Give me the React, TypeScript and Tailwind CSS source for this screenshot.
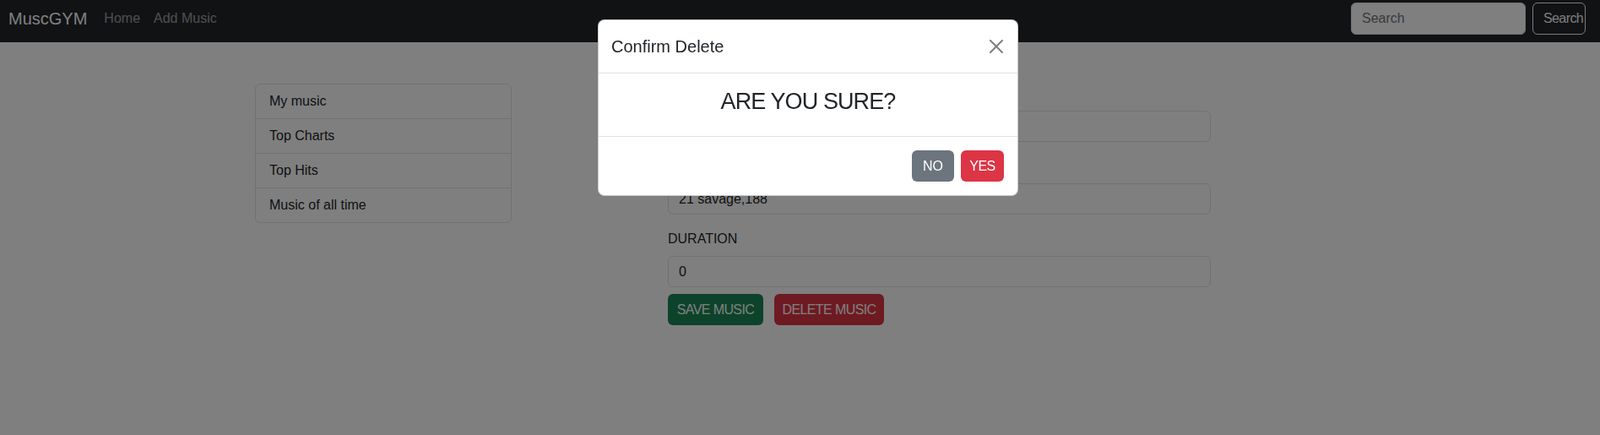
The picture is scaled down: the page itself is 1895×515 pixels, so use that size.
import { useState } from 'react';

const font = { fontFamily: '"Liberation Sans", Arial, sans-serif' };

const menu = ['My music', 'Top Charts', 'Top Hits', 'Music of all time'];

function Navbar() {
  return (
    <nav className="flex h-[50px] items-start bg-[#212529] pl-[10px] pr-[17px] pt-[3px]">
      <div className="flex h-[38px] flex-1 items-center">
        <a className="mr-[12px] text-[20px] leading-[30px] text-white">MuscGYM</a>
        <a className="px-2 text-base text-white/55">Home</a>
        <a className="px-2 text-base text-white/55">Add Music</a>
      </div>
      <form className="flex items-center gap-2">
        <input
          placeholder="Search"
          className="h-[38px] w-[207px] rounded-md border border-[#dee2e6] bg-white px-3 text-base text-[#212529] placeholder:text-[#6c757d]"
        />
        <button
          type="button"
          className="flex h-[38px] w-[63px] items-center whitespace-nowrap rounded-md border border-[#f8f9fa] pl-3 text-base tracking-[-0.6px] text-[#f8f9fa]"
        >
          Search
        </button>
      </form>
    </nav>
  );
}

function Field({ label, value, last }: { label: string; value: string; last?: boolean }) {
  return (
    <div className={last ? '' : 'mb-[17px]'}>
      <label className="mb-2 block text-base leading-6 text-[#212529]">{label}</label>
      <input
        readOnly
        value={value}
        className="block h-[37px] w-full rounded-md border border-[#dee2e6] bg-white px-3 text-base text-[#212529]"
      />
    </div>
  );
}

function ConfirmModal() {
  return (
    <div className="fixed inset-0 bg-black/50">
      <div className="ml-[708px] mt-[23px] w-[498px] rounded-lg border border-black/20 bg-white">
        <div className="flex items-center justify-between border-b border-[#dee2e6] p-4">
          <h5 className="-ml-[1px] text-[20px] leading-[30px] text-[#212529]">Confirm Delete</h5>
          <button type="button" className="mr-[1px] h-4 w-4">
            <svg viewBox="0 0 16 16" className="h-4 w-4" fill="#000" fillOpacity="0.5">
              <path d="M.293.293a1 1 0 0 1 1.414 0L8 6.586 14.293.293a1 1 0 1 1 1.414 1.414L9.414 8l6.293 6.293a1 1 0 0 1-1.414 1.414L8 9.414l-6.293 6.293a1 1 0 0 1-1.414-1.414L6.586 8 .293 1.707a1 1 0 0 1 0-1.414z" />
            </svg>
          </button>
        </div>
        <div className="border-b border-[#dee2e6] p-4">
          <h3 className="mb-2 text-center text-[27px] leading-[34px] tracking-[-0.9px] text-[#212529]">
            ARE YOU SURE?
          </h3>
        </div>
        <div className="flex justify-end gap-2 px-4 py-4">
          <button type="button" className="h-[37px] w-[50px] rounded-md bg-[#6c757d] text-base text-white">
            NO
          </button>
          <button type="button" className="h-[37px] w-[51px] rounded-md bg-[#dc3545] text-base tracking-[-0.5px] text-white">
            YES
          </button>
        </div>
      </div>
    </div>
  );
}

export default function App() {
  const [showModal] = useState(true);

  return (
    <div className="min-h-screen bg-white" style={font}>
      <Navbar />
      <main className="flex pl-[302px] pt-[49px]">
        <ul className="w-[304px] self-start rounded-md border border-[#dee2e6]">
          {menu.map((item, i) => (
            <li
              key={item}
              className={`px-4 py-2 text-base leading-6 text-[#212529] ${i < menu.length - 1 ? 'border-b border-[#dee2e6]' : ''}`}
            >
              {item}
            </li>
          ))}
        </ul>
        <div className="ml-[185px] w-[643px]">
          <Field label="TITLE" value="Gun smoke" />
          <Field label="ARTIST" value="21 savage,188" />
          <Field label="DURATION" value="0" last />
          <div className="mt-2 flex gap-[13px]">
            <button type="button" className="h-[37px] w-[113px] rounded-md bg-[#198754] text-base tracking-[-0.6px] text-white">
              SAVE MUSIC
            </button>
            <button type="button" className="h-[37px] w-[130px] rounded-md bg-[#dc3545] text-base tracking-[-0.6px] text-white">
              DELETE MUSIC
            </button>
          </div>
        </div>
      </main>
      {showModal && <ConfirmModal />}
    </div>
  );
}
